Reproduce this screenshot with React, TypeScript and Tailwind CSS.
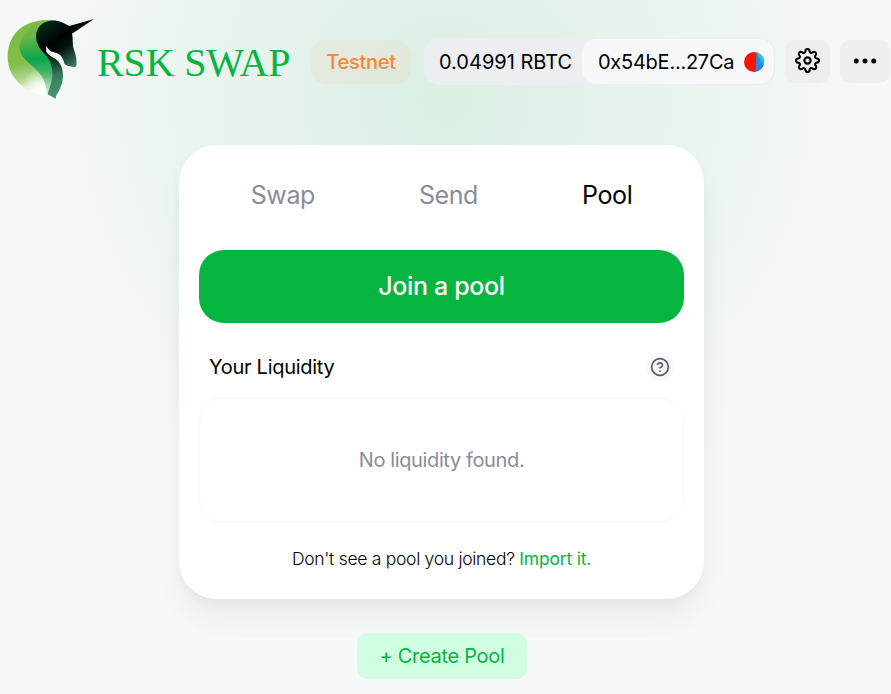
import { FiHelpCircle, FiMoreHorizontal, FiSettings } from "react-icons/fi";

function Logo() {
  return (
    <svg width="97" height="95" viewBox="0 0 291 285" className="mt-[10px] shrink-0">
      <defs>
        <linearGradient id="outer" x1="60" y1="60" x2="105" y2="250" gradientUnits="userSpaceOnUse">
          <stop offset="0" stopColor="#7dbb45" />
          <stop offset="0.5" stopColor="#82bf4c" />
          <stop offset="0.78" stopColor="#b5d994" />
          <stop offset="1" stopColor="#ffffff" />
        </linearGradient>
        <radialGradient id="glow" cx="120" cy="238" r="62" gradientUnits="userSpaceOnUse">
          <stop offset="0" stopColor="#fff" stopOpacity="0.95" />
          <stop offset="1" stopColor="#fff" stopOpacity="0" />
        </radialGradient>
        <linearGradient id="inner" x1="120" y1="30" x2="135" y2="250" gradientUnits="userSpaceOnUse">
          <stop offset="0" stopColor="#7cba40" />
          <stop offset="0.22" stopColor="#6ab543" />
          <stop offset="0.52" stopColor="#08a74c" />
          <stop offset="0.72" stopColor="#42b468" />
          <stop offset="1" stopColor="#d9f0de" />
        </linearGradient>
        <linearGradient id="head" x1="125" y1="45" x2="222" y2="170" gradientUnits="userSpaceOnUse">
          <stop offset="0" stopColor="#00291a" />
          <stop offset="0.4" stopColor="#000302" />
          <stop offset="0.6" stopColor="#02130c" />
          <stop offset="1" stopColor="#3d7f61" />
        </linearGradient>
        <linearGradient id="neck" x1="125" y1="110" x2="165" y2="265" gradientUnits="userSpaceOnUse">
          <stop offset="0" stopColor="#000b06" />
          <stop offset="0.25" stopColor="#06261a" />
          <stop offset="0.6" stopColor="#3a7b5d" />
          <stop offset="1" stopColor="#4a9972" />
        </linearGradient>
      </defs>
      <path d="M160 32C132 28 98 32 70 49C37 69 22 106 23 143C24 178 41 207 66 227C88 244 115 249 140 259L150 190L105 110Z" fill="url(#outer)" />
      <path d="M66 227C88 244 115 249 140 259L147 220L100 175L40 185Z" fill="url(#glow)" />
      <path d="M112 96L138 107L139 125C146 136 155 139 166 146C182 157 188 174 189 193C190 218 179 242 169 256L167 266L143 253L130 170Z" fill="url(#neck)" />
      <path d="M160 32C128 28 91 45 71 75C57 96 54 118 67 137C86 164 116 177 130 207C139 225 141 243 140 259C147 241 157 216 157 190C157 165 148 146 130 127C109 105 101 71 118 50C128 38 144 34 160 32Z" fill="url(#inner)" />
      <path d="M130 127C113 109 105 87 109 69C113 49 129 35 151 32C173 29 190 38 208 48L282 27L216 71C220 86 216 100 222 119C229 137 231 154 229 168L225 172L204 168L194 163C190 146 184 134 170 129C159 125 153 126 147 119L138 107L138 127Z" fill="url(#head)" />
    </svg>
  );
}

export default function App() {
  return (
    <div className="flex h-[694px] w-[891px] flex-col overflow-hidden bg-[#f7f8fa] bg-[radial-gradient(circle_450px_at_445px_100px,#daefe2_0%,#f7f8fa_100%)] font-['Inter',sans-serif] text-black">
      <header className="flex h-[125px] shrink-0 items-start">
        <Logo />
        <h1 className="mt-[40px] w-[214px] shrink-0 whitespace-nowrap font-['Liberation_Serif',serif] text-[40px] leading-[46px] tracking-[-0.15px] text-[#06b53f]">RSK SWAP</h1>
        <div className="mt-[40px] flex h-[44px] w-[100px] shrink-0 items-center justify-center rounded-[15px] bg-[#ff8f2b]/6 text-[20px] font-medium tracking-[-0.3px] text-[#f9863a]">Testnet</div>
        <div className="ml-[13px] mt-[38px] flex h-[47px] w-[351px] shrink-0 items-center rounded-[15px] bg-[#edeef2]">
          <span className="w-[157px] whitespace-nowrap pl-[15px] text-[20px]">0.04991 RBTC</span>
          <button className="flex h-[47px] w-[194px] items-center rounded-[15px] border border-[#edeef2] bg-[#f7f8fa] pl-[16px] text-[20px]">
            <span className="w-[146px] whitespace-nowrap text-left tracking-[-0.25px]">0x54bE...27Ca</span>
            <svg width="20" height="20" viewBox="0 0 20 20">
              <clipPath id="avatar"><circle cx="10" cy="10" r="10" /></clipPath>
              <g clipPath="url(#avatar)">
                <rect width="20" height="20" fill="#fb1403" />
                <path d="M12.5 0H20V20H11.5Z" fill="#2588e2" />
                <path d="M12 0H20V15Z" fill="#18c4f2" />
              </g>
            </svg>
          </button>
        </div>
        <button className="ml-[10px] mt-[40px] flex h-[43px] w-[45px] shrink-0 items-center justify-center rounded-[10px] bg-[#edeef2] pb-[2px]">
          <FiSettings size={25} />
        </button>
        <button className="ml-[10px] mt-[40px] flex h-[43px] w-[50px] shrink-0 items-center justify-center rounded-[10px] bg-[#edeef2] pb-px">
          <FiMoreHorizontal size={30} />
        </button>
      </header>
      <main className="ml-[179px] mt-[20px] flex h-[454px] w-[525px] shrink-0 flex-col rounded-[37.5px] bg-white px-5 shadow-[0_0_1px_rgba(0,0,0,0.01),0_5px_10px_rgba(0,0,0,0.04),0_20px_30px_rgba(0,0,0,0.04),0_30px_40px_rgba(0,0,0,0.01)]">
        <nav className="flex h-[105px] items-center justify-center gap-[104px] pb-[3px] text-[25px] tracking-[-0.4px] text-[#888d9b]">
          <a>Swap</a>
          <a>Send</a>
          <a className="text-black">Pool</a>
        </nav>
        <button className="h-[73px] rounded-[25px] bg-[#06b53f] text-[25px] font-medium tracking-[-0.36px] text-white">Join a pool</button>
        <div className="flex h-[74px] items-center justify-between pl-[10px] pr-[10px] pt-[14px]">
          <h2 className="text-[20px] tracking-[-0.28px]">Your Liquidity</h2>
          <span className="flex size-7 items-center justify-center rounded-full bg-[#f7f8fa] text-[#565a69]"><FiHelpCircle size={20} /></span>
        </div>
        <div className="flex h-[126px] items-center justify-center rounded-[25px] border border-[#f7f8fa] text-[20px] tracking-[-0.37px] text-[#888d9b]">No liquidity found.</div>
        <p className="mt-[22px] text-center text-[17.5px] font-light leading-[27px] tracking-[-0.29px]">
          Don't see a pool you joined? <a className="font-normal tracking-[-0.2px] text-[#06b53f]">Import it.</a>
        </p>
      </main>
      <button className="ml-[357px] mt-[34px] h-[46px] w-[170px] shrink-0 rounded-[10px] bg-[#d1fee0] text-[20px] tracking-[-0.28px] text-[#06b53f]">+ Create Pool</button>
    </div>
  );
}
